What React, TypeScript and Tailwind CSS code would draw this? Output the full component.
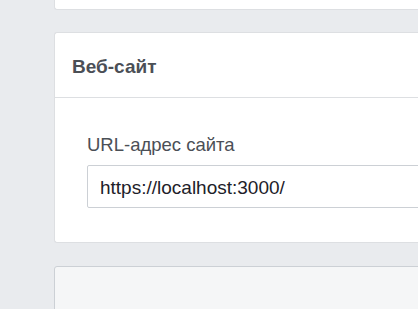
export default function App() {
  return (
    <div className="w-[418px] h-[309px] overflow-hidden bg-[#e9ebee] pl-[54px]" style={{ fontFamily: '"Liberation Sans", Arial, sans-serif' }}>
      <div className="h-[10px] bg-white rounded-b-[3px] border border-t-0 border-r-0 border-[#dddfe2] w-[400px]" />
      <div className="mt-[22px] w-[400px] bg-white rounded-[3px] border border-[#dddfe2] border-r-0">
        <div className="h-[65px] border-b border-[#dddfe2] flex items-center pl-[17px] pt-[2px]">
          <span className="text-[19px] font-bold text-[#4b4f56] leading-none">Веб-сайт</span>
        </div>
        <div className="pt-[36px] pb-[34px] pl-[32px]">
          <div className="text-[18.5px] text-[#4b4f56] leading-[22px] mb-[9px]">URL-адрес сайта</div>
          <div className="h-[43px] border border-[#ccd0d5] rounded-[2px] flex items-center pl-[12px] pt-[2px]">
            <span className="text-[19px] text-[#1d2129] leading-none">https://localhost:3000/</span>
          </div>
        </div>
      </div>
      <div className="mt-[23px] w-[400px] h-[60px] bg-[#f5f6f7] rounded-[3px] border border-[#ccd0d5]" />
    </div>
  );
}
